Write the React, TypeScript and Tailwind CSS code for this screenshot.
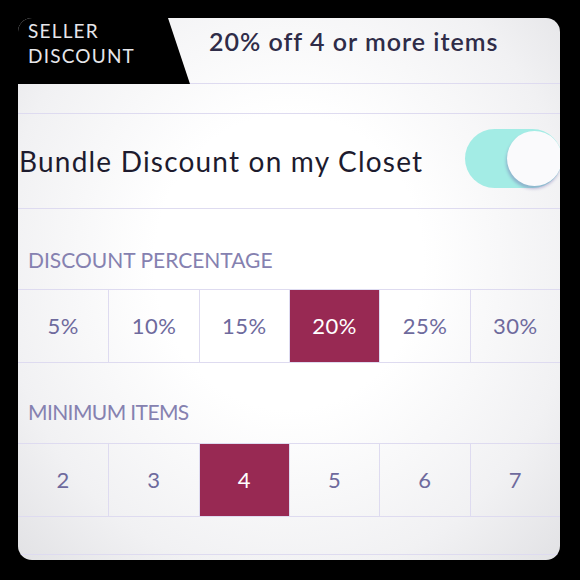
import React from "react";

const percents = ["5%", "10%", "15%", "20%", "25%", "30%"];
const counts = ["2", "3", "4", "5", "6", "7"];

function OptionGrid({ items, active }: { items: string[]; active: string }) {
  return (
    <div className="grid grid-cols-6 h-[74px] border-y border-[#dedbf0]">
      {items.map((v, i) => (
        <div
          key={v}
          className={
            (i > 0 ? "border-l border-[#dedbf0] " : "") +
            (v === active
              ? "bg-[#982953] text-white "
              : "text-[#6e6a9d] ") +
            "flex items-center justify-center text-[22px] leading-none tracking-[0.5px]"
          }
        >
          {v}
        </div>
      ))}
    </div>
  );
}

export default function App() {
  return (
    <div className="w-[580px] h-[580px] bg-black p-[18px] font-['Lato',sans-serif]">
      <div className="relative w-[542px] h-[542px] rounded-[14px] overflow-hidden flex flex-col bg-[radial-gradient(ellipse_at_50%_45%,#ffffff_35%,#f1f1f3_75%,#e2e2e5_100%)]">
        {/* header: black tab + offer summary */}
        <div className="flex h-[66px] shrink-0">
          <div className="w-[172px] bg-black [clip-path:polygon(0_0,150px_0,172px_100%,0_100%)] pl-[10px] pt-[0px] text-[19px] leading-[25px] tracking-[1.2px] text-[#e6e6ea]">
            <div>SELLER</div>
            <div>DISCOUNT</div>
          </div>
          <div className="flex-1 border-b border-[#dedbf0] pl-[19px] pt-[11px] text-[25px] leading-[24px] font-semibold tracking-[1px] text-[#2f2c48]">
            20% off 4 or more items
          </div>
        </div>

        <div className="h-[29px] shrink-0" />

        {/* bundle toggle row */}
        <div className="h-[96px] shrink-0 border-y border-[#dedbf0] flex items-center justify-between">
          <span className="pl-[1px] text-[28px] leading-none tracking-[1.2px] text-[#1d1b2e]">
            Bundle Discount on my Closet
          </span>
          <div className="relative w-[97px] h-[59px] mr-[-2px] mb-[6px] rounded-full bg-[#a3ece5]">
            <div className="absolute left-[42px] top-[2px] w-[55px] h-[55px] rounded-full bg-[#fafafc] shadow-[-1px_3px_3px_rgba(110,100,170,0.4)]" />
          </div>
        </div>

        <div className="h-[80px] shrink-0 pt-[40px] pl-[10px] text-[21px] leading-[21px] text-[#8581b0]">
          DISCOUNT PERCENTAGE
        </div>
        <OptionGrid items={percents} active="20%" />

        <div className="h-[80px] shrink-0 pt-[38px] pl-[10px] text-[21px] leading-[21px] tracking-[-0.6px] text-[#8581b0]">
          MINIMUM ITEMS
        </div>
        <OptionGrid items={counts} active="4" />

        <div className="h-[38px] shrink-0 border-b border-[#dedbf0]" />
      </div>
    </div>
  );
}
